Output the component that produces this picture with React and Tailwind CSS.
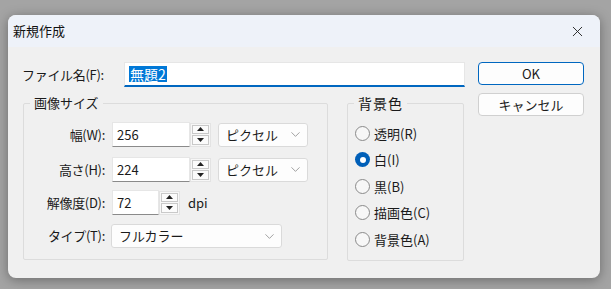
import { ChevronDown, X } from 'lucide-react';

const font = { fontFamily: '"Noto Sans CJK JP", "Noto Sans", sans-serif' };

const Spinner = () => (
  <div className="h-[24px] w-[21px] flex flex-col gap-[1px] border border-[#e3e3e3] bg-[#f7f7f7] p-[1px]">
    <div className="flex-1 flex items-center justify-center border border-[#c9c9c9] bg-[#fbfbfb]">
      <svg width="7" height="4" viewBox="0 0 7 4"><path d="M3.5 0 L7 4 L0 4 Z" fill="#222" /></svg>
    </div>
    <div className="flex-1 flex items-center justify-center border border-[#c9c9c9] bg-[#fbfbfb]">
      <svg width="7" height="4" viewBox="0 0 7 4"><path d="M0 0 L7 0 L3.5 4 Z" fill="#222" /></svg>
    </div>
  </div>
);

const NumberField = ({ value, width }) => (
  <div className="flex items-center">
    <div
      className={`${width} h-[25px] bg-white border border-[#e6e6e6] border-b-[#8a8a8a] flex items-center pl-[4px] text-[13px] text-[#1a1a1a]`}
    >
      {value}
    </div>
    <Spinner />
  </div>
);

const Select = ({ label, width }) => (
  <div
    className={`${width} h-[24px] bg-[#fdfdfd] border border-[#dadada] rounded-[3px] flex items-center justify-between pl-[7px] pr-[4px] text-[13px] text-[#1a1a1a]`}
  >
    <span>{label}</span>
    <ChevronDown size={15} strokeWidth={1.1} className="text-[#777]" />
  </div>
);

const FieldRow = ({ label, children, className }) => (
  <div className={`flex items-center ${className}`}>
    <div className="w-[81px] text-right text-[13px] text-[#1a1a1a] tracking-[-0.3px]">{label}</div>
    <div className="ml-[7px] flex items-center">{children}</div>
  </div>
);

const Radio = ({ label, checked }) => (
  <div className="flex items-center h-[26.5px]">
    {checked ? (
      <div className="w-[15px] h-[15px] rounded-full bg-[#005fb8] flex items-center justify-center">
        <div className="w-[6px] h-[6px] rounded-full bg-white" />
      </div>
    ) : (
      <div className="w-[15px] h-[15px] rounded-full border border-[#8a8a8a] bg-[#f7f7f7]" />
    )}
    <span className="ml-[4px] text-[13px] text-[#1a1a1a]">{label}</span>
  </div>
);

export default function App() {
  return (
    <div className="w-[611px] h-[289px] bg-[#a4a4a4] pt-[15px] pl-[8px]" style={font}>
      <div className="w-[592px] h-[263px] rounded-[8px] bg-[#f0f0f0] overflow-hidden flex flex-col shadow-[0_2px_12px_rgba(0,0,0,0.35)]">
        {/* Title bar */}
        <div className="h-[32px] bg-[#eef2f9] flex items-center justify-between pl-[5px] pr-[14px]">
          <span className="text-[13px] text-[#111]">新規作成</span>
          <X size={17} strokeWidth={1.3} className="text-[#222]" />
        </div>

        {/* Body */}
        <div className="flex">
          <div className="w-[457px] flex flex-col">
            {/* File name */}
            <div className="flex items-center mt-[15px] h-[25px]">
              <div className="w-[116px] pl-[14px] text-[13px] text-[#1a1a1a] tracking-[-0.3px]">ファイル名(F):</div>
              <div className="w-[341px] h-[25px] bg-white border border-[#e6e6e6] border-b-2 border-b-[#0067c0] flex items-center pl-[4px]">
                <span className="bg-[#0078d7] text-white text-[14px] leading-[16px] px-[1px]">無題2</span>
              </div>
            </div>

            <div className="flex mt-[7px] ml-[15px]">
              {/* 画像サイズ */}
              <fieldset className="w-[305px] h-[166px] border border-[#dcdcdc] rounded-[2px] px-0">
                <legend className="ml-[6px] px-[4px] text-[13px] leading-[18px] text-[#1a1a1a]">画像サイズ</legend>
                <FieldRow label="幅(W):" className="mt-[10px]">
                  <NumberField value="256" width="w-[78px]" />
                  <div className="ml-[7px]"><Select label="ピクセル" width="w-[90px]" /></div>
                </FieldRow>
                <FieldRow label="高さ(H):" className="mt-[10px]">
                  <NumberField value="224" width="w-[78px]" />
                  <div className="ml-[7px]"><Select label="ピクセル" width="w-[90px]" /></div>
                </FieldRow>
                <FieldRow label="解像度(D):" className="mt-[8px]">
                  <NumberField value="72" width="w-[47px]" />
                  <span className="ml-[8px] text-[13px] text-[#1a1a1a]">dpi</span>
                </FieldRow>
                <FieldRow label="タイプ(T):" className="mt-[9px]">
                  <div className="-ml-[1px]"><Select label="フルカラー" width="w-[171px]" /></div>
                </FieldRow>
              </fieldset>

              {/* 背景色 */}
              <fieldset className="ml-[19px] w-[117px] h-[167px] border border-[#dcdcdc] rounded-[2px] px-0">
                <legend className="ml-[6px] px-[4px] text-[14px] leading-[18px] tracking-[1px] text-[#1a1a1a]">背景色</legend>
                <div className="flex flex-col pl-[7px] mt-[8px]">
                  <Radio label="透明(R)" />
                  <Radio label="白(I)" checked />
                  <Radio label="黒(B)" />
                  <Radio label="描画色(C)" />
                  <Radio label="背景色(A)" />
                </div>
              </fieldset>
            </div>
          </div>

          {/* Buttons */}
          <div className="ml-[13px] w-[106px] flex flex-col mt-[15px] gap-[8px]">
            <button className="h-[23px] rounded-[4px] border border-[#0067c0] bg-[#fdfdfd] text-[13px] text-[#1a1a1a]">OK</button>
            <button className="h-[23px] rounded-[4px] border border-[#d0d0d0] bg-[#fdfdfd] text-[13px] text-[#1a1a1a]">キャンセル</button>
          </div>
        </div>
      </div>
    </div>
  );
}
